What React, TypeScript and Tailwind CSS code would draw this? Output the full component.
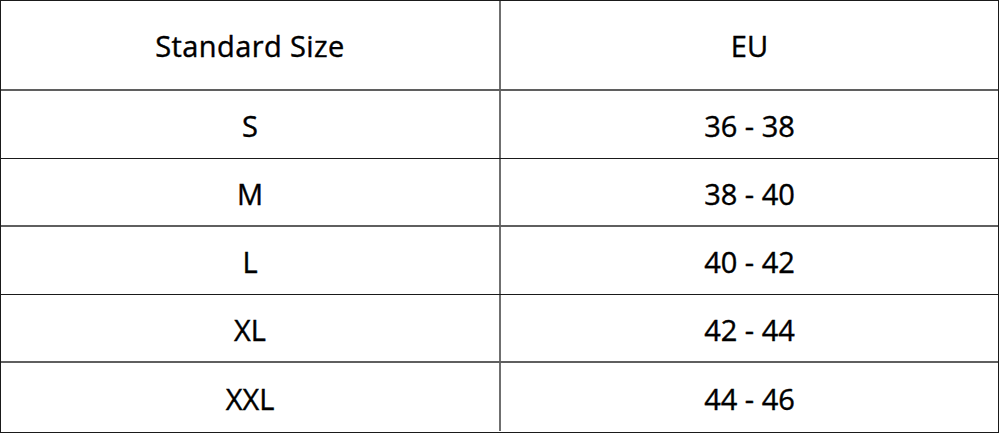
import React from "react";

const rows = [
  ["S", "36 - 38"],
  ["M", "38 - 40"],
  ["L", "40 - 42"],
  ["XL", "42 - 44"],
  ["XXL", "44 - 46"],
];

export default function App() {
  return (
    <div className="w-[1000px] h-[434px] bg-white" style={{ fontFamily: "'Open Sans', sans-serif" }}>
      <div className="w-[999px] h-[433px] border border-[#1a1a1a] flex flex-col text-black text-[29px] [-webkit-text-stroke:0.4px_#000]">
        <div className="h-[90px] flex border-b-2 border-[#5f5f5f]">
          <div className="w-[500px] flex items-center justify-center border-r-2 border-[#6f6f6f] pt-[2px] tracking-[0.4px]">Standard Size</div>
          <div className="flex-1 flex items-center justify-center pt-[2px]">EU</div>
        </div>
        {rows.map(([a, b], i) => (
          <div
            key={a}
            className={
              "h-[68px] flex " +
              (i === rows.length - 1
                ? ""
                : i % 2 === 0
                ? "border-b border-[#1a1a1a]"
                : "border-b-2 border-[#5f5f5f]")
            }
          >
            <div className="w-[500px] flex items-center justify-center border-r-2 border-[#6f6f6f] pt-[3px]">{a}</div>
            <div className="flex-1 flex items-center justify-center pt-[3px]">{b}</div>
          </div>
        ))}
      </div>
    </div>
  );
}
